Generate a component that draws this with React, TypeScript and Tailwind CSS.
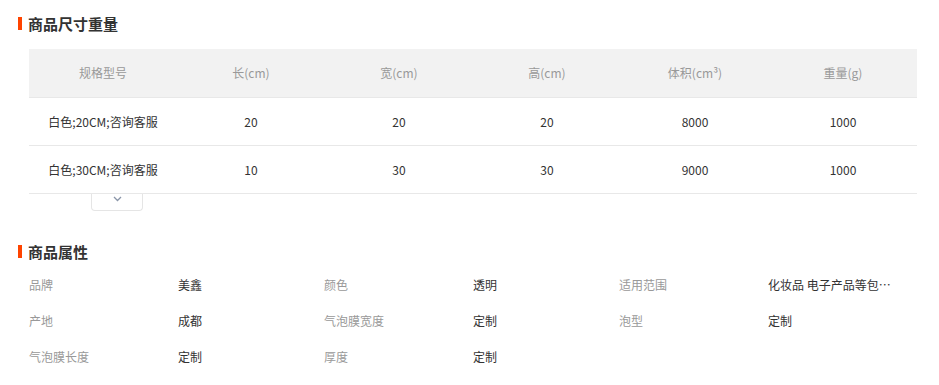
import React from "react";

const font = "font-['Microsoft_YaHei','Noto_Sans_CJK_SC',sans-serif]";

const headers = ["规格型号", "长(cm)", "宽(cm)", "高(cm)", "体积(cm³)", "重量(g)"];
const rows = [
  ["白色;20CM;咨询客服", "20", "20", "20", "8000", "1000"],
  ["白色;30CM;咨询客服", "10", "30", "30", "9000", "1000"],
];

const attrs = [
  ["品牌", "美鑫"], ["颜色", "透明"], ["适用范围", "化妆品 电子产品等包装运输"],
  ["产地", "成都"], ["气泡膜宽度", "定制"], ["泡型", "定制"],
  ["气泡膜长度", "定制"], ["厚度", "定制"],
];

const Title: React.FC<{ text: string }> = ({ text }) => (
  <div className="flex items-center h-[16px]">
    <span className="w-[4px] h-[13px] bg-[#ff4400] mr-[6px]" />
    <h2 className="text-[15px] font-bold text-[#333] leading-none">{text}</h2>
  </div>
);

const App: React.FC = () => {
  return (
    <div className={`w-[939px] h-[385px] bg-white pl-[18px] pt-[15px] ${font}`}>
      <Title text="商品尺寸重量" />

      <div className="ml-[11px] mt-[18px] w-[888px]">
        <div className="grid grid-cols-6 h-[49px] bg-[#f2f2f2] border-b border-[#e8e8e8] items-center text-[12px] text-[#999]">
          {headers.map((h) => <div key={h} className="text-center">{h}</div>)}
        </div>
        {rows.map((r, i) => (
          <div key={i} className="grid grid-cols-6 h-[48px] border-b border-[#e8e8e8] items-center text-[12px] text-[#333]">
            {r.map((c, j) => <div key={j} className="text-center">{c}</div>)}
          </div>
        ))}
        <div className="ml-[62px] w-[52px] h-[17px] border border-t-0 border-[#e5e5e5] rounded-b-[4px] flex justify-center pt-[2px]">
          <svg width="9" height="6" viewBox="0 0 9 6" fill="none">
            <path d="M1 1l3.5 3.5L8 1" stroke="#8a95a8" strokeWidth="1.3" />
          </svg>
        </div>
      </div>

      <div className="mt-[32px]">
        <Title text="商品属性" />
      </div>

      <div className="ml-[11px] mt-[18px] grid grid-cols-[149px_146px_149px_146px_149px_124px] gap-y-[20px] text-[12px] leading-[16px]">
        {attrs.map(([k, v]) => (
          <React.Fragment key={k}>
            <div className="text-[#999]">{k}</div>
            <div className="text-[#333] truncate">{v}</div>
          </React.Fragment>
        ))}
      </div>
    </div>
  );
};

export default App;
